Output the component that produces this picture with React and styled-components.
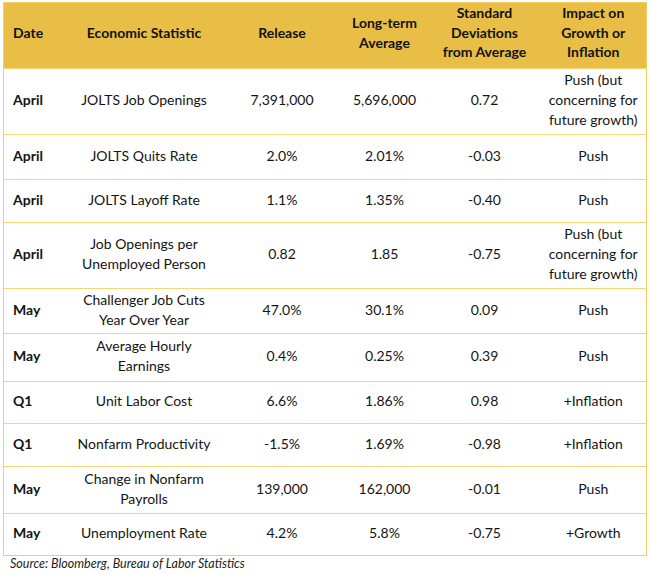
import React from "react";
import styled, { createGlobalStyle } from "styled-components";

const Global = createGlobalStyle`
  html, body { margin: 0; padding: 0; background: #fff; }
  body { font-family: Lato, "Open Sans", sans-serif; color: #141414; }
`;

const Page = styled.div`
  padding: 2px 0 0 3px;
  width: 643px;
`;

const Table = styled.table`
  width: 643px;
  border-collapse: collapse;
  table-layout: fixed;
  border: 1px solid #f6cc63;
  font-size: 14px;
`;

const HeadRow = styled.tr`
  height: 66px;
  background: #e8be47;
`;

const Th = styled.th`
  font-weight: 700;
  line-height: 19.5px;
  text-align: ${(p) => (p.$left ? "left" : "center")};
  padding: 0 ${(p) => (p.$left ? "2px" : "4px")} 6px ${(p) => (p.$left ? "9px" : "4px")};
  vertical-align: middle;
  color: #121212;
`;

const Row = styled.tr`
  border-top: 1px solid #f9d477;
`;

const Td = styled.td`
  font-weight: ${(p) => (p.$bold ? 700 : 400)};
  line-height: 20px;
  text-align: ${(p) => (p.$left ? "left" : "center")};
  padding: 0 ${(p) => (p.$left ? "2px" : "4px")} 3px ${(p) => (p.$left ? "9px" : "4px")};
  vertical-align: middle;
`;

const Source = styled.p`
  margin: 0 0 0 7px;
  font-style: italic;
  font-size: 12.5px;
  color: #222;
`;

const cols = [61, 159, 117, 88, 112, 106];

const rows = [
  { h: 66, d: "April", s: ["JOLTS Job Openings"], r: "7,391,000", a: "5,696,000", sd: "0.72", i: ["Push (but", "concerning for", "future growth)"] },
  { h: 45, d: "April", s: ["JOLTS Quits Rate"], r: "2.0%", a: "2.01%", sd: "-0.03", i: ["Push"] },
  { h: 43, d: "April", s: ["JOLTS Layoff Rate"], r: "1.1%", a: "1.35%", sd: "-0.40", i: ["Push"] },
  { h: 66, d: "April", s: ["Job Openings per", "Unemployed Person"], r: "0.82", a: "1.85", sd: "-0.75", i: ["Push (but", "concerning for", "future growth)"] },
  { h: 45, d: "May", s: ["Challenger Job Cuts", "Year Over Year"], r: "47.0%", a: "30.1%", sd: "0.09", i: ["Push"] },
  { h: 48, d: "May", s: ["Average Hourly", "Earnings"], r: "0.4%", a: "0.25%", sd: "0.39", i: ["Push"] },
  { h: 42, d: "Q1", s: ["Unit Labor Cost"], r: "6.6%", a: "1.86%", sd: "0.98", i: ["+Inflation"] },
  { h: 43, d: "Q1", s: ["Nonfarm Productivity"], r: "-1.5%", a: "1.69%", sd: "-0.98", i: ["+Inflation"] },
  { h: 47, d: "May", s: ["Change in Nonfarm", "Payrolls"], r: "139,000", a: "162,000", sd: "-0.01", i: ["Push"] },
  { h: 42, d: "May", s: ["Unemployment Rate"], r: "4.2%", a: "5.8%", sd: "-0.75", i: ["+Growth"] },
];

const Lines = ({ list }) =>
  list.map((t, k) => (
    <React.Fragment key={k}>
      {k > 0 && <br />}
      {t}
    </React.Fragment>
  ));

export default function App() {
  return (
    <Page>
      <Global />
      <Table>
        <colgroup>
          {cols.map((w, k) => (
            <col key={k} style={{ width: w }} />
          ))}
        </colgroup>
        <thead>
          <HeadRow>
            <Th $left>Date</Th>
            <Th>Economic Statistic</Th>
            <Th>Release</Th>
            <Th>
              Long-term
              <br />
              Average
            </Th>
            <Th>
              Standard
              <br />
              Deviations
              <br />
              from Average
            </Th>
            <Th>
              Impact on
              <br />
              Growth or
              <br />
              Inflation
            </Th>
          </HeadRow>
        </thead>
        <tbody>
          {rows.map((r, k) => (
            <Row key={k} style={{ height: r.h }}>
              <Td $left $bold>{r.d}</Td>
              <Td><Lines list={r.s} /></Td>
              <Td>{r.r}</Td>
              <Td>{r.a}</Td>
              <Td>{r.sd}</Td>
              <Td><Lines list={r.i} /></Td>
            </Row>
          ))}
        </tbody>
      </Table>
      <Source>Source: Bloomberg, Bureau of Labor Statistics</Source>
    </Page>
  );
}
